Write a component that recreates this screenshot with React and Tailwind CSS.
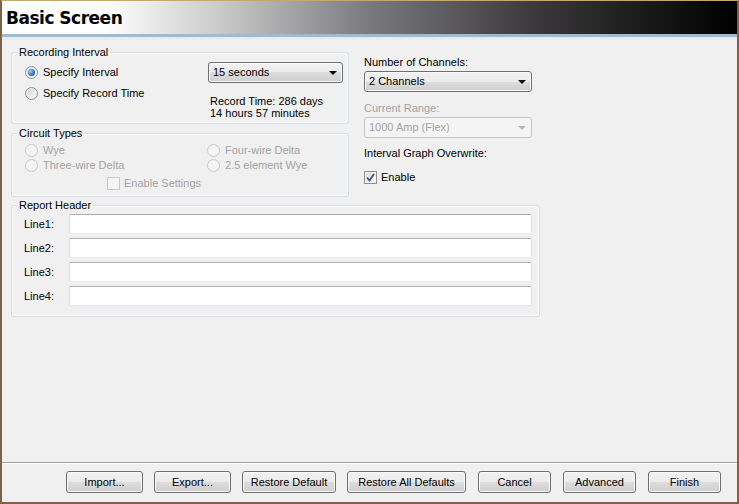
import React from "react"

const btnBg =
  "bg-[linear-gradient(to_bottom,#f2f2f2_0%,#ebebeb_50%,#dddddd_50%,#cfcfcf_100%)]"

const Radio = ({ checked, disabled }) => (
  <span
    className={`flex h-[13px] w-[13px] shrink-0 items-center justify-center rounded-full border ${
      disabled
        ? "border-[#c9c9c9] bg-[#f4f4f4]"
        : "border-[#8e8f8f] bg-linear-to-br from-[#d4d4d4] to-[#fbfbfb] shadow-[inset_0_0_0_1px_#f4f4f4]"
    }`}
  >
    {checked && (
      <span className="h-[7px] w-[7px] rounded-full bg-[radial-gradient(circle_at_35%_35%,#8fd0f8_0%,#2f78c4_55%,#1a4a8a_100%)]" />
    )}
  </span>
)

const RadioRow = ({ label, checked, disabled }) => (
  <div className="flex h-[13px] items-center">
    <Radio checked={checked} disabled={disabled} />
    <span className={`ml-[5px] ${disabled ? "text-[#a3a3a3]" : "text-black"}`}>
      {label}
    </span>
  </div>
)

const Checkbox = ({ label, checked, disabled }) => (
  <div className="flex h-[13px] items-center">
    <span
      className={`flex h-[13px] w-[13px] shrink-0 items-center justify-center border ${
        disabled
          ? "border-[#c9c9c9] bg-[#f4f4f4]"
          : "border-[#8e8f8f] bg-linear-to-br from-[#dcdcdc] to-[#fcfcfc] shadow-[inset_0_0_0_1px_#f4f4f4]"
      }`}
    >
      {checked && (
        <svg width="11" height="11" viewBox="0 0 11 11">
          <path
            d="M2 5.5 L4.5 8.5 L9 2"
            fill="none"
            stroke="#3f5590"
            strokeWidth="1.9"
          />
        </svg>
      )}
    </span>
    <span className={`ml-[4px] ${disabled ? "text-[#a3a3a3]" : "text-black"}`}>
      {label}
    </span>
  </div>
)

const Dropdown = ({ value, disabled, className }) => (
  <div
    className={`flex h-[21px] items-center justify-between rounded-[3px] border pl-[4px] pr-[5px] ${
      disabled
        ? "border-[#c3c7ca] bg-[#f4f4f4] text-[#a3a3a3]"
        : `border-[#707070] ${btnBg} shadow-[inset_0_0_0_1px_#fafafa]`
    } ${className || ""}`}
  >
    <span>{value}</span>
    <svg width="8" height="4" viewBox="0 0 8 4">
      <path d="M0 0H8L4 4Z" fill={disabled ? "#b8b8b8" : "#000"} />
    </svg>
  </div>
)

const Button = ({ label, width }) => (
  <button
    className={`flex h-[22px] items-center justify-center rounded-[3px] border border-[#707070] ${btnBg} shadow-[inset_0_0_0_1px_#fafafa] ${width}`}
  >
    {label}
  </button>
)

const Group = ({ title, className, children }) => (
  <fieldset
    className={`rounded-[3px] border border-[#d5dfe5] shadow-[inset_0_0_0_1px_#fafafa] ${className}`}
  >
    <legend className="ml-[5px] px-[2px] leading-[13px]">{title}</legend>
    {children}
  </fieldset>
)

const TextLine = ({ label }) => (
  <div className="flex h-[20px] items-center">
    <span className="w-[57px] pl-[12px]">{label}</span>
    <input
      type="text"
      className="h-[20px] w-[463px] rounded-[2px] border border-[#abadb3] border-x-[#dbdfe6] border-b-[#e3e9ef] bg-white"
    />
  </div>
)

export default function App() {
  return (
    <div className="flex h-[504px] w-[739px] flex-col border-x-2 border-t border-b-2 border-x-[#7d6245] border-t-[#c9a66b] border-b-[#7d6245] bg-[#f0f0f0] font-['Liberation_Sans',Arial,sans-serif] text-[11px] leading-[13px] text-black">
      <div className="flex h-[33px] shrink-0 items-center bg-[linear-gradient(to_right,#ffffff_0%,#ffffff_14%,#c9c9c9_30%,#7a797e_50%,#3c3a3c_72%,#000000_100%)] pl-[4px]">
        <h1 className="font-['DejaVu_Sans',Verdana,sans-serif] text-[17px] font-bold leading-[20px] tracking-[-0.5px]">
          Basic Screen
        </h1>
      </div>
      <div className="h-[3px] shrink-0 bg-[#9fbbd3]" />
      <div className="h-[4px] shrink-0 bg-linear-to-b from-[#e2eaf1] to-[#f0f0f0]" />

      <div className="flex-1 pl-[9px] pt-[5px]">
        <div className="flex">
          <div className="flex w-[338px] flex-col">
            <Group title="Recording Interval" className="h-[78px]">
              <div className="flex">
                <div className="flex flex-1 flex-col gap-[8px] pl-[13px] pt-[7px]">
                  <RadioRow label="Specify Interval" checked />
                  <RadioRow label="Specify Record Time" />
                </div>
                <div className="mr-[5px] mt-[3px] w-[135px]">
                  <Dropdown value="15 seconds" />
                  <div className="mt-[12px] pl-[2px] leading-[12px]">
                    <p>Record Time: 286 days</p>
                    <p>14 hours 57 minutes</p>
                  </div>
                </div>
              </div>
            </Group>

            <Group title="Circuit Types" className="mt-[3px] h-[70px]">
              <div className="pl-[13px] pt-[4px]">
                <div className="grid grid-cols-[182px_1fr] gap-y-[2px]">
                  <RadioRow label="Wye" disabled />
                  <RadioRow label="Four-wire Delta" disabled />
                  <RadioRow label="Three-wire Delta" disabled />
                  <RadioRow label="2.5 element Wye" disabled />
                </div>
                <div className="ml-[82px] mt-[5px]">
                  <Checkbox label="Enable Settings" disabled />
                </div>
              </div>
            </Group>
          </div>

          <div className="ml-[15px] flex w-[168px] flex-col pt-[10px]">
            <p>Number of Channels:</p>
            <Dropdown value="2 Channels" className="mt-[2px]" />
            <p className="mt-[10px] text-[#a3a3a3]">Current Range:</p>
            <Dropdown value="1000 Amp (Flex)" disabled className="mt-[2px]" />
            <p className="mt-[9px]">Interval Graph Overwrite:</p>
            <div className="mt-[11px]">
              <Checkbox label="Enable" checked />
            </div>
          </div>
        </div>

        <Group title="Report Header" className="mt-[2px] h-[118px] w-[529px]">
          <div className="flex flex-col gap-[4px] pt-[2px]">
            <TextLine label="Line1:" />
            <TextLine label="Line2:" />
            <TextLine label="Line3:" />
            <TextLine label="Line4:" />
          </div>
        </Group>
      </div>

      <div className="flex h-[40px] shrink-0 border-t border-[#a0a0a0] pl-[64px] pt-[8px] shadow-[inset_0_1px_0_#ffffff]">
        <Button label="Import..." width="w-[77px]" />
        <div className="ml-[11px]">
          <Button label="Export..." width="w-[77px]" />
        </div>
        <div className="ml-[11px]">
          <Button label="Restore Default" width="w-[94px]" />
        </div>
        <div className="ml-[11px]">
          <Button label="Restore All Defaults" width="w-[119px]" />
        </div>
        <div className="ml-[12px]">
          <Button label="Cancel" width="w-[73px]" />
        </div>
        <div className="ml-[12px]">
          <Button label="Advanced" width="w-[73px]" />
        </div>
        <div className="ml-[12px]">
          <Button label="Finish" width="w-[73px]" />
        </div>
      </div>
    </div>
  )
}
